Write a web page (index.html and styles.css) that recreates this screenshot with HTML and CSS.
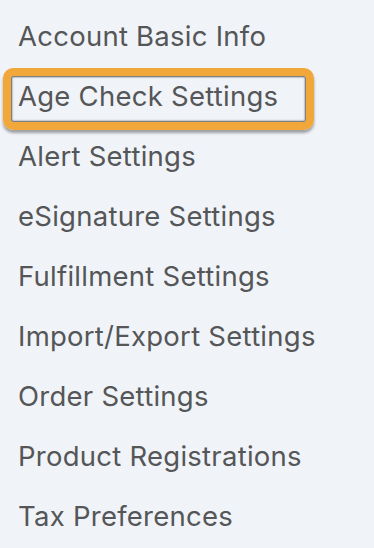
FILE: index.html
```html
<!DOCTYPE html>
<html lang="en">
<head>
    <meta charset="UTF-8">
    <meta name="viewport" content="width=device-width, initial-scale=1.0">
    <title>Settings</title>
    <link rel="stylesheet" href="styles.css">
</head>
<body>
    <!-- Settings menu -->
    <ul class="settings-menu">
        <li><a href="#">Account Basic Info</a></li>
        <li class="highlight"><a href="#">Age Check Settings</a></li>
        <li><a href="#">Alert Settings</a></li>
        <li><a href="#">eSignature Settings</a></li>
        <li><a href="#">Fulfillment Settings</a></li>
        <li><a href="#">Import/Export Settings</a></li>
        <li><a href="#">Order Settings</a></li>
        <li><a href="#">Product Registrations</a></li>
        <li><a href="#">Tax Preferences</a></li>
    </ul>
</body>
</html>
```

FILE: styles.css
```css
body {
    margin: 0;
    padding: 0;
    font-family: Inter, "Noto Sans", sans-serif;
    background-color: #f0f3f8;
}

.settings-menu {
    list-style: none;
    margin: 0;
    padding: 6px 0 0 0;
}

.settings-menu li {
    position: relative;
    height: 60px;
    line-height: 60px;
    padding-left: 18px;
}

.settings-menu a {
    color: #555657;
    font-size: 27.5px;
    letter-spacing: 0.25px;
    text-decoration: none;
}

/* Orange highlight frame */
.settings-menu .highlight::after {
    content: "";
    position: absolute;
    left: 3px;
    top: 2px;
    width: 295px;
    height: 46px;
    border: 8px solid #f2a73b;
    border-radius: 10px;
    box-shadow: inset 0 0 2px 1px rgba(50, 50, 50, 0.8), 0 3px 3px rgba(0, 0, 0, 0.35);
}
```
